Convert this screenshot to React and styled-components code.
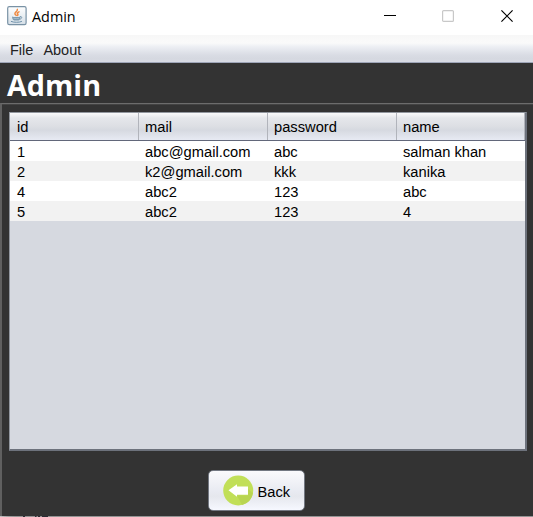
import React from "react";
import styled, { createGlobalStyle } from "styled-components";

const GlobalStyle = createGlobalStyle`
  * { box-sizing: border-box; }
  body { margin: 0; background: #fff; overflow: hidden; }
`;

const Window = styled.div`
  display: flex;
  flex-direction: column;
  width: 533px;
  height: 517px;
  background: #333;
  color: #000;
  font: 15px/20px "Liberation Sans", Arial, sans-serif;
  overflow: hidden;
`;

const TitleBar = styled.header`
  display: flex;
  align-items: center;
  flex: none;
  height: 35px;
  padding: 0 20px 3px 7px;
  background: #fff;
`;

const WindowTitle = styled.span`
  flex: 1;
  margin: 1px 0 0 5px;
  font: 14.4px/20px "Open Sans", "Noto Sans", sans-serif;
`;

const WindowControls = styled.div`
  display: grid;
  grid-template-columns: 58px 59px 12px;
`;

const MenuBar = styled.nav`
  display: flex;
  flex: none;
  gap: 10px;
  height: 28px;
  padding: 5px 10px 0;
  border-bottom: 1px solid #9fa6b8;
  background: linear-gradient(#f7f7f7 0, #fafafa 8px, #eceef3 12px, #d9dce4 20px, #d5d8e0 24px, #d9dce5);
`;

const MenuItem = styled.span`
  font-size: 14.5px;
  color: #232323;
`;

const Heading = styled.h1`
  flex: none;
  height: 40px;
  margin: 0;
  padding-left: 7px;
  color: #fff;
  font: bold 28.8px/44px "Open Sans", "Noto Sans", sans-serif;
`;

const Panel = styled.main`
  display: flex;
  flex-direction: column;
  flex: 1;
  min-height: 0;
  padding: 8px 6px 0 7px;
  border-top: 1px solid #6c6c6c;
  border-left: 2px solid #606060;
  box-shadow: inset 0 1px #434343;
`;

const TableFrame = styled.div`
  flex: none;
  height: 339px;
  width: 518px;
  border: 1px solid #92979f;
  border-right: 2px solid #6d727c;
  border-bottom: 2px solid #6d727c;
  background: #d6d9e0;
`;

const Row = styled.div`
  display: grid;
  grid-template-columns: 129px 129px 129px 1fr;
  height: 20px;
  background: ${({ $odd }) => ($odd ? "#f2f2f2" : "#fff")};
`;

const HeaderRow = styled(Row)`
  height: 28px;
  border-bottom: 1px solid #62677a;
  background: linear-gradient(#fafafb 0, #e5e7eb 5px, #dddfe4 13px, #d6d9e0 17px, #e7eaf3 27px);
`;

const Cell = styled.span`
  padding: 1px 0 0 6px;
  font-size: 14.7px;
  line-height: 20px;
  white-space: nowrap;

  &:first-child {
    padding-left: 7px;
  }
`;

const HeaderCell = styled(Cell)`
  padding-top: 4px;
  border-right: 1px solid #b1b4bb;
`;

const Actions = styled.footer`
  display: flex;
  justify-content: center;
  padding: 19px 24px 0 0;
`;

const BackButton = styled.button`
  display: flex;
  align-items: center;
  gap: 4px;
  width: 97px;
  height: 41px;
  padding: 0 0 0 14px;
  border: 1px solid #737882;
  border-radius: 5px;
  background: linear-gradient(#fafafc, #e9ebf2 50%, #e5e7ed 65%, #f6f8ff);
  color: #000;
  font: 14.7px/20px "Liberation Sans", Arial, sans-serif;
`;

const ButtonLabel = styled.span`
  padding-top: 2px;
`;

const BottomEdge = styled.div`
  display: flex;
  flex: none;
  height: 1px;
  background: linear-gradient(90deg, #c4c4c4 0, #a0a0a0 8px, #949494 16px);
`;

function JavaIcon() {
  return (
    <svg width="20" height="20" viewBox="0 0 20 20">
      <defs>
        <linearGradient id="plate" x2="0" y2="1">
          <stop stopColor="#fff" />
          <stop offset="1" stopColor="#d5dfe7" />
        </linearGradient>
      </defs>
      <rect x=".7" y=".7" width="18.4" height="18" rx="1.6" fill="url(#plate)" stroke="#7992a5" strokeWidth="1.2" />
      <g fill="none" strokeLinecap="round">
        <path d="M10.3 3.4c.8 2-3.4 3-2.3 4.7.4.6 1 .8 1.2 1.3M12 5.8c-2.4 1.2-1.6 1.8-1.2 2.4.4.7 0 1.1-.4 1.3" stroke="#f08a42" strokeWidth="1.5" />
        <path d="M13.4 10.6c2.4-.2 1.6 2.2-.6 2.7M4.3 15.5c2.5 1.1 8.1 1.1 10.3 0" stroke="#6f91aa" strokeWidth="1" />
      </g>
      <path d="M5 10.4c2 .7 6.2.7 8.5 0-.2 2.2-1 3.8-2 4.2H7.2C6 14 5.1 12.6 5 10.4z" fill="#7d9bb0" />
      <path d="M6.5 12.3c1.8.4 4 .4 5.5 0" stroke="#c4d1da" strokeWidth=".6" fill="none" />
    </svg>
  );
}

function MinimizeIcon() {
  return (
    <svg width="12" height="12" viewBox="0 0 12 12">
      <path d="M0 5.5h12" stroke="#000" />
    </svg>
  );
}

function MaximizeIcon() {
  return (
    <svg width="12" height="12" viewBox="0 0 12 12">
      <rect x=".6" y=".6" width="10.8" height="10.8" rx="1" fill="none" stroke="#c8c8c8" strokeWidth="1.2" />
    </svg>
  );
}

function CloseIcon() {
  return (
    <svg width="12" height="12" viewBox="0 0 12 12">
      <path d="M.4.4l11.2 11.2M11.6.4L.4 11.6" stroke="#000" strokeWidth="1.2" />
    </svg>
  );
}

function BackIcon() {
  return (
    <svg width="31" height="31" viewBox="0 0 31 31">
      <circle cx="15.2" cy="15.5" r="15" fill="#c1df58" />
      <path d="M14 20.5l5 9.5a15 15 0 0 0 11-12l-5-4v6.5z" fill="#b9d551" />
      <path d="M5.5 15.3l8.5-6v2.2h11v8.2H14v2z" fill="#fff" />
    </svg>
  );
}

function EdgeMarks() {
  return (
    <svg width="60" height="1" viewBox="0 0 60 1">
      <path d="M23 .5h2M35 .5h1.5M38 .5h2M42 .5h6" stroke="#2c2c34" />
    </svg>
  );
}

const columns = ["id", "mail", "password", "name"];
const users = [
  ["1", "abc@gmail.com", "abc", "salman khan"],
  ["2", "k2@gmail.com", "kkk", "kanika"],
  ["4", "abc2", "123", "abc"],
  ["5", "abc2", "123", "4"],
];

export default function App() {
  return (
    <Window>
      <GlobalStyle />
      <TitleBar>
        <JavaIcon />
        <WindowTitle>Admin</WindowTitle>
        <WindowControls>
          <MinimizeIcon />
          <MaximizeIcon />
          <CloseIcon />
        </WindowControls>
      </TitleBar>
      <MenuBar>
        <MenuItem>File</MenuItem>
        <MenuItem>About</MenuItem>
      </MenuBar>
      <Heading>Admin</Heading>
      <Panel>
        <TableFrame>
          <HeaderRow>
            {columns.map((name) => (
              <HeaderCell key={name}>{name}</HeaderCell>
            ))}
          </HeaderRow>
          {users.map((user, index) => (
            <Row key={user[0]} $odd={index % 2 === 1}>
              {user.map((value, column) => (
                <Cell key={columns[column]}>{value}</Cell>
              ))}
            </Row>
          ))}
        </TableFrame>
        <Actions>
          <BackButton>
            <BackIcon />
            <ButtonLabel>Back</ButtonLabel>
          </BackButton>
        </Actions>
      </Panel>
      <BottomEdge>
        <EdgeMarks />
      </BottomEdge>
    </Window>
  );
}
